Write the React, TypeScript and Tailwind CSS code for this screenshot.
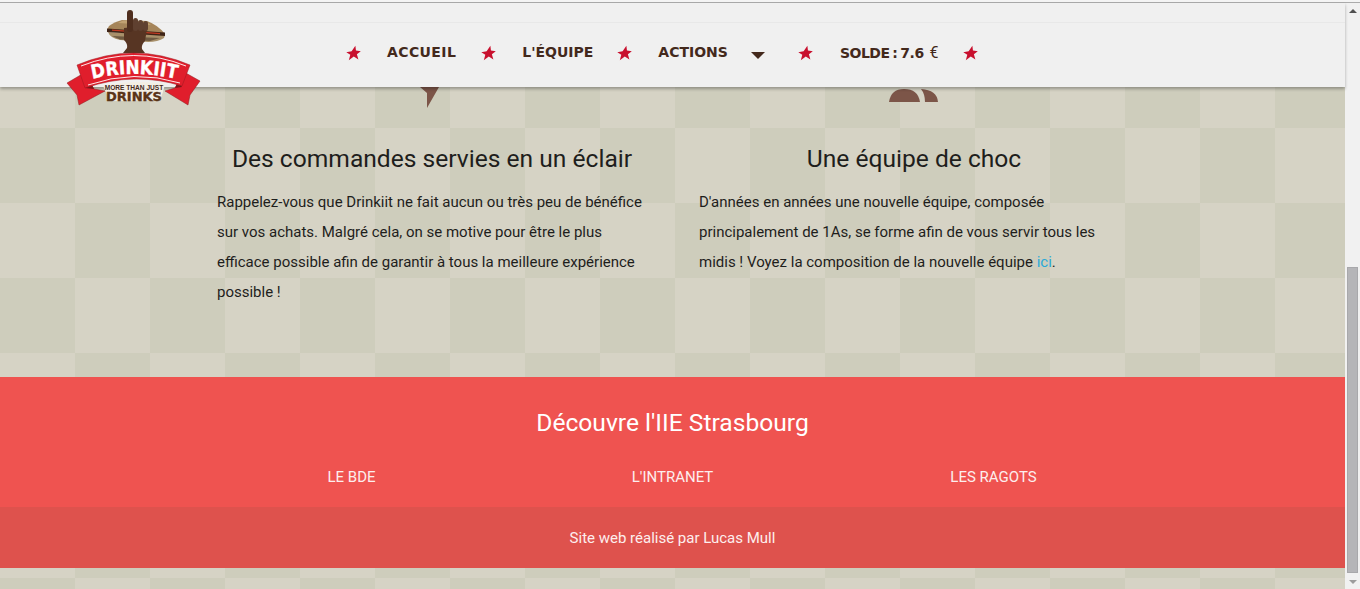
const Star = () => (
  <svg viewBox="0 0 16 16" className="w-[15px] h-[16px] shrink-0">
    <polygon
      points="10,0.3 10.6,5.4 15.8,6 11.6,9.2 13.2,15 8.3,11.6 3,15.7 4.6,9.8 0.3,7.2 6,6"
      fill="#c8102e"
    />
  </svg>
);

// sandwich + hand + ribbon, coordinates are page pixels
const Logo = () => (
  <svg viewBox="60 0 150 110" className="absolute left-[60px] top-0 w-[150px] h-[110px] z-20">
    <defs>
      <path id="logo-arc" d="M92 76 Q134 66 177 76" fill="none" />
      <path id="logo-arc-top" d="M81 63 Q134 42 186 63" fill="none" />
      <path id="logo-arc-bot" d="M88 82 Q134 66 180 80" fill="none" />
    </defs>
    {/* sandwich */}
    <path d="M107 27 L109 23 Q114 19 122 17 L147 18 Q158 22 165 31Z" fill="#a5855a" />
    <path d="M118 20 L123 17.5 L146 18.5 L151 22 Z" fill="#c0a172" />
    <path d="M108 29 L165 32 L164 35 Q158 39 148 39 L120 37 Q110 35 108 29Z" fill="#a8906a" />
    <path d="M112 33 L160 35 L150 38 L120 36.5Z" fill="#6f5a42" />
    <path d="M107 25.5 L165 29.5 L165 33 L107 29Z" fill="#3f2417" />
    <path d="M112 26.5 L160 30 L160 31.2 L112 27.7Z" fill="#c23a22" />
    {/* hand */}
    <path d="M124 25 L134 24 L147 26 L145 38 Q141 42 142 46 L145 50 L123 50 L127 45 Q128 41 124 37Z" fill="#573523" />
    <rect x="127" y="7" width="6" height="22" rx="3" fill="#4f2f1f" />
    <rect x="133" y="15" width="5" height="13" rx="2.5" fill="#5f4030" />
    <rect x="138" y="17" width="5" height="11" rx="2.5" fill="#5f4030" />
    <rect x="143" y="18" width="5" height="10" rx="2.5" fill="#5f4030" />
    {/* ribbon tails */}
    <path d="M67 80 L84 70 L94 86 L105 88 L79 102 L77 92Z" fill="#e01e2c" stroke="#8d1a1f" strokeWidth="0.5" />
    <path d="M200 78 L184 69 L175 85 L165 88 L188 102 L190 92Z" fill="#e01e2c" stroke="#8d1a1f" strokeWidth="0.5" />
    <path d="M85 85 L94 86 L90 78Z" fill="#7e1418" />
    <path d="M182 84 L175 85 L178 78Z" fill="#7e1418" />
    {/* ribbon body */}
    <path d="M77 62 Q134 38 190 62 L182 83 Q134 68 85 85Z" fill="#e01e2c" stroke="#9a1a20" strokeWidth="0.5" />
    <use href="#logo-arc-top" stroke="#fff" strokeWidth="0.9" />
    <use href="#logo-arc-bot" stroke="#fff" strokeWidth="0.9" />
    <text fill="#fff" stroke="#fff" strokeWidth="0.4" fontFamily="'DejaVu Sans', sans-serif" fontWeight="700" fontSize="19">
      <textPath href="#logo-arc" startOffset="50%" textAnchor="middle" textLength="85" lengthAdjust="spacingAndGlyphs">
        DRINKIIT
      </textPath>
    </text>
    {/* cartouche */}
    <path d="M103 83 Q134 76 165 81 L163 89 L160 97 L110 98 L106 89Z" fill="#f3eee4" />
    <text
      x="134"
      y="87"
      textAnchor="middle"
      fill="#43291c"
      fontFamily="'Liberation Sans', sans-serif"
      fontWeight="700"
      fontSize="6.6"
    >
      MORE THAN JUST
    </text>
    <text
      x="134"
      y="98"
      textAnchor="middle"
      fill="#5a3417"
      stroke="#5a3417"
      strokeWidth="0.4"
      fontFamily="'DejaVu Sans', sans-serif"
      fontWeight="700"
      fontSize="13"
    >
      DRINKS
    </text>
  </svg>
);

const Header = () => (
  <header className="relative z-10 h-[84px] bg-[#f0f0f0] shadow-[0_2px_3px_rgba(0,0,0,0.3)]">
    <div className="h-[20px] border-b border-[#e8e8e8]" />
    <Logo />
    <nav className="flex items-center h-[60px] pl-[346px] pb-[1px] font-['DejaVu_Sans',sans-serif] font-bold text-[14px] text-[#43291c] whitespace-nowrap">
      <Star />
      <a className="ml-[26px] tracking-[0.4px]">ACCUEIL</a>
      <span className="ml-[25px]"><Star /></span>
      <a className="ml-[26px]">L'ÉQUIPE</a>
      <span className="ml-[24px]"><Star /></span>
      <a className="ml-[26px]">ACTIONS</a>
      <svg viewBox="0 0 14 7" className="ml-[23px] mt-[5px] w-[14px] h-[7px]">
        <polygon points="0,0 14,0 7,7" fill="#43291c" />
      </svg>
      <span className="ml-[33px]"><Star /></span>
      <a className="ml-[27px] tracking-[-0.5px] [word-spacing:-1.5px]">
        SOLDE : 7.6 <span className="ml-[3px] font-['Roboto',sans-serif] font-normal text-[16px]">€</span>
      </a>
      <span className="ml-[25px]"><Star /></span>
    </nav>
  </header>
);

const Features = () => (
  <section className="grid grid-cols-[430px_430px] gap-x-[52px] pl-[217px] pb-[70px] text-[15px] leading-[30px] text-[#1e1e1c]">
    <div>
      <div className="flex justify-center h-[21px]">
        <svg viewBox="0 0 30 21" className="w-[30px] h-[21px]">
          <polygon points="3,0 22,0 10,21 10,6" fill="#7c5548" />
        </svg>
      </div>
      <h2 className="mt-[35px] mb-[12px] text-[24.6px] leading-[32px] text-center">Des commandes servies en un éclair</h2>
      <p>
        Rappelez-vous que Drinkiit ne fait aucun ou très peu de bénéfice sur vos achats. Malgré cela, on se motive pour
        être le plus efficace possible afin de garantir à tous la meilleure expérience possible !
      </p>
    </div>
    <div>
      <div className="flex justify-center h-[21px]">
        <svg viewBox="0 0 50 21" className="w-[50px] h-[21px]">
          <path d="M0 15 Q2 2 15 2 Q29 2 31 15Z" fill="#7c5548" />
          <path d="M32 2 Q48 3 49 15 L49 15 L36 15 Q36 7 32 2Z" fill="#7c5548" />
        </svg>
      </div>
      <h2 className="mt-[35px] mb-[12px] text-[24.6px] leading-[32px] text-center">Une équipe de choc</h2>
      <p>
        D'années en années une nouvelle équipe, composée principalement de 1As, se forme afin de vous servir tous les
        midis ! Voyez la composition de la nouvelle équipe <a className="text-[#29a9d8]">ici</a>.
      </p>
    </div>
  </section>
);

const Footer = () => (
  <footer className="text-white text-center">
    <div className="h-[130px] bg-[#ef5350] pt-[30px]">
      <h3 className="text-[24.6px] leading-[32px]">Découvre l'IIE Strasbourg</h3>
      <div className="mt-[28px] flex justify-center text-[15px] leading-[20px] text-[#fdeeee]">
        <a className="w-[321px]">LE BDE</a>
        <a className="w-[321px]">L'INTRANET</a>
        <a className="w-[321px]">LES RAGOTS</a>
      </div>
    </div>
    <div className="flex items-center justify-center h-[61px] pt-[2px] bg-[#de524d] text-[15px] text-[#fdeeee]">
      Site web réalisé par Lucas Mull
    </div>
  </footer>
);

const Scrollbar = () => (
  <aside className="flex flex-col items-center w-[15px] shrink-0 bg-[#f1f1f1]">
    <svg viewBox="0 0 8 4" className="mt-[6px] w-[8px] h-[4px]">
      <polygon points="4,0 8,4 0,4" fill="#505050" />
    </svg>
    <div className="mt-[254px] w-[11px] h-[306px] bg-[#b5b5b8] border border-[#a8a8ab]" />
    <svg viewBox="0 0 8 4" className="mt-[7px] w-[8px] h-[4px]">
      <polygon points="0,0 8,0 4,4" fill="#9c9c9c" />
    </svg>
  </aside>
);

export default function App() {
  return (
    <div className="h-[589px] overflow-hidden font-['Roboto',sans-serif] bg-[#f4f4f4]">
      <div className="h-[3px] bg-[#f4f4f4] border-b border-[#ababab]" />
      <div className="flex h-[586px]">
        <main className="w-[1345px] h-full bg-[repeating-conic-gradient(#cecdbc_0_25%,#d6d3c5_0_50%)] bg-[length:150px_150px] bg-[position:0_50px]">
          <Header />
          <Features />
          <Footer />
        </main>
        <Scrollbar />
      </div>
    </div>
  );
}
